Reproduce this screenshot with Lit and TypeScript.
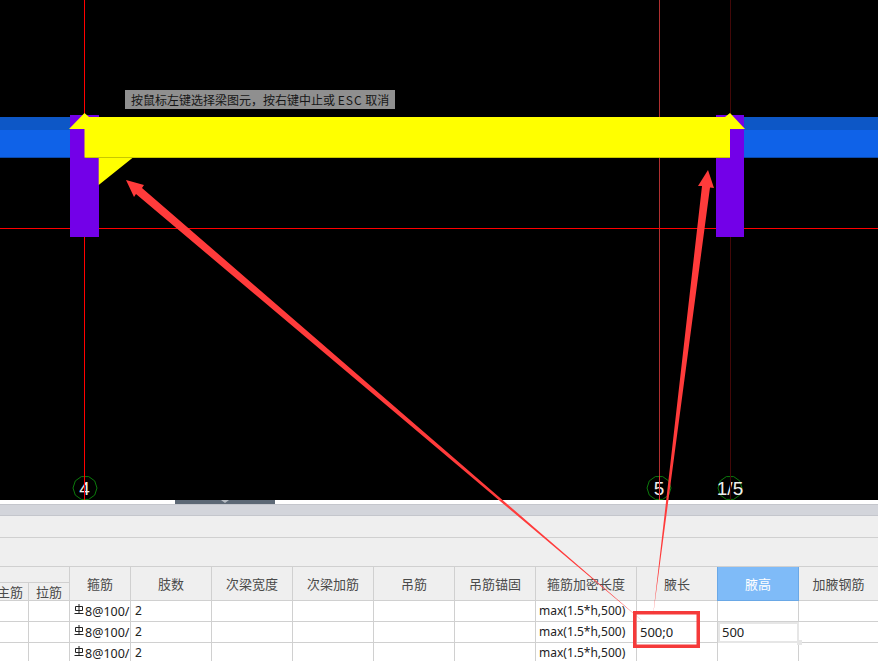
import { LitElement, html, svg, css } from "lit";
import { customElement } from "lit/decorators.js";

const HEADERS = ["肢数", "次梁宽度", "次梁加筋", "吊筋", "吊筋锚固", "箍筋加密长度", "腋长", "腋高", "加腋钢筋"];

const rebarIcon = svg`<svg class="rebar" viewBox="0 0 10 11" width="10" height="11" aria-hidden="true"><path d="M1.5 2.5H8.5V6.5H1.5ZM5 0V9.5M0.5 9.5H9.5" fill="none" stroke="#222" stroke-width="1"/></svg>`;

@customElement("app-root")
export class AppRoot extends LitElement {
  static styles = css`
    :host {
      display: block;
      position: relative;
      width: 878px;
      height: 661px;
      overflow: hidden;
      background: #fff;
      font-family: "Noto Sans", "Noto Sans CJK SC", sans-serif;
      color: #222;
    }
    .canvas { position: relative; height: 500px; background: #000; }
    .canvas > svg { display: block; }
    .bubble {
      font: 19px "Liberation Sans", sans-serif;
      fill: #eee;
      text-anchor: middle;
    }
    .tip {
      position: absolute;
      left: 125px;
      top: 90px;
      width: 270px;
      height: 19px;
      box-sizing: border-box;
      padding-left: 6px;
      background: #8f8f8f;
      color: #161616;
      font: 12px/19px "Noto Sans CJK SC", sans-serif;
      white-space: pre;
    }
    .tip span { letter-spacing: 1px; }
    .strip { height: 4px; background: #fff; }
    .handle {
      position: relative;
      width: 100px;
      height: 4px;
      margin-left: 175px;
      background: #5c6875;
      display: flex;
      justify-content: center;
    }
    .handle i {
      width: 0;
      height: 0;
      border: 4px solid transparent;
      border-top: 3px solid #b5bbc2;
      border-bottom: 0;
    }
    .band {
      height: 10px;
      background: #d3d5db;
      border-top: 1px solid #c4c6cc;
      border-bottom: 1px solid #c4c6cc;
    }
    .bar { background: #efefef; border-bottom: 1px solid #d0d0d0; }
    .bar.one { height: 21px; }
    .bar.two { height: 28px; }
    .table {
      display: grid;
      grid-template-columns: 29px 41px 61px repeat(5, 81px) 101px 81px 81px 79px;
      grid-template-rows: 16px 18px repeat(3, 21px);
      font-size: 12px;
    }
    .cell, .head {
      box-sizing: border-box;
      border-right: 1px solid #d0d0d0;
      border-bottom: 1px solid #d0d0d0;
      overflow: hidden;
      white-space: nowrap;
    }
    .end { border-right: 0; }
    .head {
      background: #efefef;
      color: #4a4a4a;
      font: 13px "Noto Sans CJK SC", sans-serif;
      display: flex;
      align-items: center;
      justify-content: center;
    }
    .tall { grid-row: span 2; }
    .wide { grid-column: span 2; }
    .main { padding-right: 8px; }
    .main span { flex: none; }
    .hot {
      background: #7fbbf8;
      color: #fff;
      border: 1px solid #6aa8e6;
      border-top: 0;
      margin-left: -1px;
    }
    .cell {
      padding: 0 0 0 3px;
      line-height: 20px;
      height: 21px;
      background: #fff;
    }
    .ctext { display: inline-flex; align-items: center; height: 20px; }
    .rebar { margin-right: 1px; margin-top: -4px; }
    .cell.bars { padding-left: 4px; font-size: 12.5px; }
    .cell.sp { padding-left: 4px; }
    .cell.val { font-size: 13px; }
    .active {
      position: relative;
      overflow: visible;
      border: 0;
      padding: 0;
      font-size: 13px;
    }
    .active b {
      display: block;
      box-sizing: border-box;
      height: 21px;
      width: 81px;
      font-weight: 400;
      padding-left: 2px;
      line-height: 17px;
      border: 2px solid #e6e6e6;
    }
    .active u {
      position: absolute;
      right: -3px;
      bottom: -2px;
      width: 5px;
      height: 5px;
      background: #e6e6e6;
    }
    .marks { position: absolute; inset: 0; pointer-events: none; }
  `;

  private row(i: number) {
    const active = i === 1;
    return html`
      <div class="cell"></div>
      <div class="cell"></div>
      <div class="cell bars"><span class="ctext">${rebarIcon}8@100/</span></div>
      <div class="cell sp"><span class="ctext">2</span></div>
      <div class="cell"></div>
      <div class="cell"></div>
      <div class="cell"></div>
      <div class="cell"></div>
      <div class="cell"><span class="ctext">max(1.5*h,500)</span></div>
      <div class="cell val"><span class="ctext">${active ? "500;0" : ""}</span></div>
      ${active
        ? html`<div class="cell active"><b>500</b><u></u></div>`
        : html`<div class="cell"></div>`}
      <div class="cell end"></div>
    `;
  }

  render() {
    return html`
      <div class="canvas">
        <svg width="878" height="500" viewBox="0 0 878 500">
          <path d="M659.5 0V500" stroke="#b03030" stroke-width="1"/>
          <path d="M730.5 0V500" stroke="#420808" stroke-width="1"/>
          <path d="M0 228.5H878" stroke="#f00" stroke-width="1"/>
          <path d="M84.5 0V500" stroke="#f00" stroke-width="1"/>

          <rect x="0" y="117" width="70" height="13" fill="#0d57c6"/>
          <rect x="0" y="130" width="70" height="27" fill="#0f62e8"/>
          <rect x="744" y="117" width="134" height="13" fill="#0d57c6"/>
          <rect x="744" y="130" width="134" height="27" fill="#0f62e8"/>
          <rect x="0" y="157" width="70" height="1" fill="#0b49a8"/>
          <rect x="744" y="157" width="134" height="1" fill="#0b49a8"/>

          <rect x="70" y="115" width="29" height="122" fill="#7300e8"/>
          <rect x="716" y="115" width="28" height="122" fill="#7300e8"/>

          <path d="M84.5 113L89 117H730V157.5H133L98.7 185V157.5H84.5V129H69Z" fill="#ffff00"/>
          <path d="M730 113L745 129H730V117H725Z" fill="#ffff00"/>
          <path d="M85 157.5H730" stroke="#c8c800" stroke-width="1"/>

          ${[85, 659, 730].map(
            (x) => svg`<polygon points="${this.octagon(x, 488, 12)}" fill="none" stroke="#0c7a0c" stroke-width="1"/>`
          )}
          <text class="bubble" x="84.5" y="495">4</text>
          <text class="bubble" x="659" y="495">5</text>
          <text class="bubble" x="730" y="495">1/5</text>
          <path d="M84.5 476V500" stroke="#f00" stroke-width="1"/>
          <path d="M659.5 476V500" stroke="#e03030" stroke-width="1"/>
          <path d="M730.5 476V500" stroke="#420808" stroke-width="1"/>
        </svg>
        <div class="tip">按鼠标左键选择梁图元，按右键中止或 <span>ESC</span> 取消</div>
      </div>
      <div class="strip"><div class="handle"><i></i></div></div>
      <div class="band"></div>
      <div class="bar one"></div>
      <div class="bar two"></div>
      <div class="table">
        <div class="head wide"></div>
        <div class="head tall">箍筋</div>
        ${HEADERS.map(
          (h) => html`<div class="head tall ${h === "腋高" ? "hot" : ""} ${h === "加腋钢筋" ? "end" : ""}">${h}</div>`
        )}
        <div class="head main"><span>主筋</span></div>
        <div class="head">拉筋</div>
        ${[0, 1, 2].map((i) => this.row(i))}
      </div>
      <svg class="marks" width="878" height="661" viewBox="0 0 878 661">
        <polygon points="126,180 144,185 142,188 647,625 136,194 134,197" fill="#ff3b3b"/>
        <polygon points="708,170 714,188 710,187.5 653,616 702,186 698,186" fill="#ff3b3b"/>
        <rect x="634.75" y="612.75" width="63.5" height="33.5" fill="none" stroke="#f53a3a" stroke-width="3.5"/>
      </svg>
    `;
  }

  private octagon(cx: number, cy: number, r: number) {
    const pts: string[] = [];
    for (let i = 0; i < 10; i++) {
      const a = (Math.PI * 2 * (i + 0.5)) / 10 - Math.PI / 2;
      pts.push(`${(cx + r * Math.cos(a)).toFixed(1)},${(cy + r * Math.sin(a)).toFixed(1)}`);
    }
    return pts.join(" ");
  }
}
